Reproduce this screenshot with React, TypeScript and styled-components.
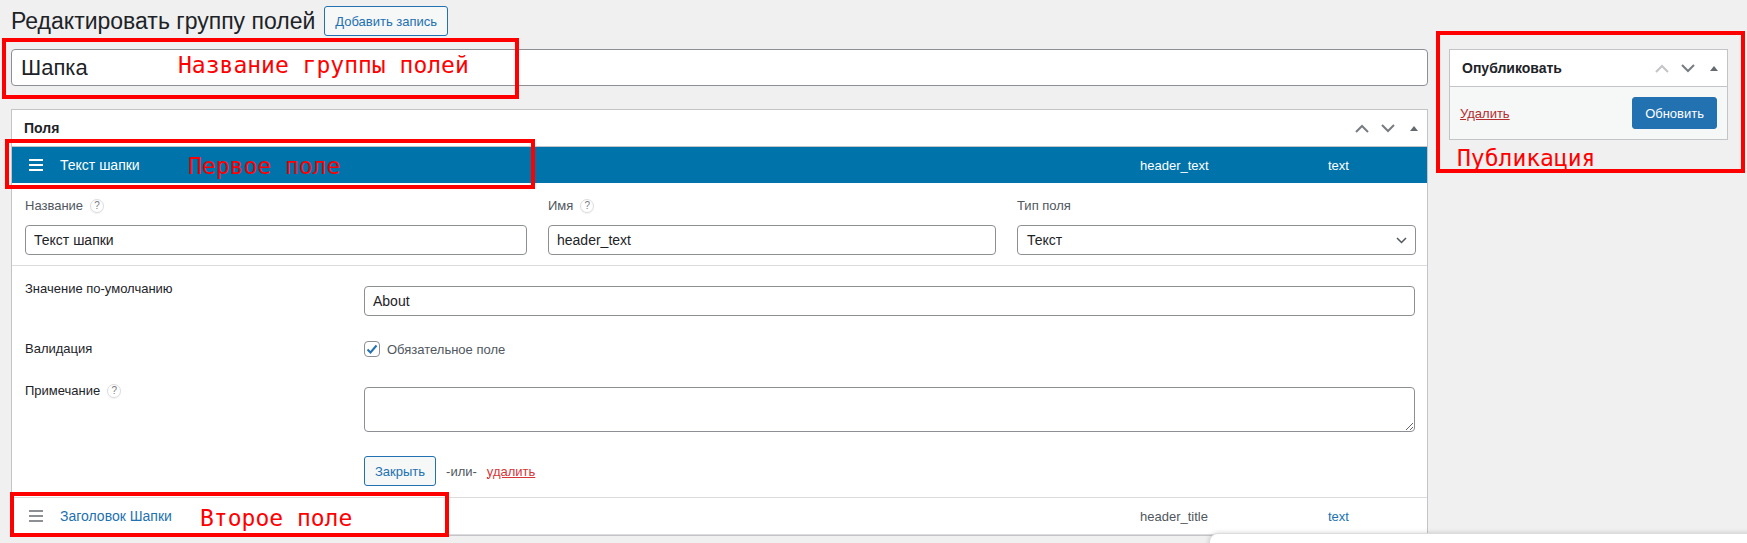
import React from "react";
import styled, { createGlobalStyle } from "styled-components";

const GlobalStyle = createGlobalStyle`
  html, body {
    margin: 0;
    background: #f0f0f1;
  }
  body {
    font-family: "Liberation Sans", Arial, sans-serif;
    font-size: 13px;
    color: #1d2327;
    overflow: hidden;
  }
  * {
    box-sizing: border-box;
  }
`;

const Page = styled.div`
  position: relative;
  height: 543px;
  padding: 6px 19px 0 11px;
  overflow: hidden;
`;

const Heading = styled.div`
  display: flex;
  align-items: flex-start;
  gap: 9px;
`;

const Title = styled.h1`
  margin: 0;
  font-size: 23px;
  font-weight: 400;
  line-height: 30px;
  color: #1d2327;
`;

const Button = styled.button<{ $primary?: boolean; $large?: boolean }>`
  height: ${(p) => (p.$large ? 32 : 30)}px;
  padding: 0 ${(p) => (p.$large ? 12 : 10)}px;
  border: 1px solid #2271b1;
  border-radius: 3px;
  background: ${(p) => (p.$primary ? "#2271b1" : "#f6f7f7")};
  color: ${(p) => (p.$primary ? "#fff" : "#2271b1")};
  font: 13px "Liberation Sans", Arial, sans-serif;
  cursor: pointer;
`;

const Columns = styled.div`
  display: flex;
  align-items: flex-start;
  gap: 21px;
  margin-top: 13px;
`;

const Main = styled.div`
  flex: 1;
  min-width: 0;
`;

const Side = styled.aside`
  flex: none;
  width: 279px;
`;

const TitleInput = styled.input`
  display: block;
  width: 100%;
  height: 37px;
  padding: 0 9px;
  border: 1px solid #8c8f94;
  border-radius: 4px;
  background: #fff;
  font: 22px "Liberation Sans", Arial, sans-serif;
  color: #1d2327;
  outline: none;
`;

const Panel = styled.section`
  margin-top: 23px;
  background: #fff;
  border: 1px solid #c3c4c7;
`;

const PanelHead = styled.div`
  display: flex;
  align-items: center;
  justify-content: space-between;
  height: 37px;
  padding-left: 12px;
  border-bottom: 1px solid #c3c4c7;
`;

const PanelTitle = styled.h2`
  margin: 0;
  font-size: 14px;
  font-weight: 700;
  color: #1d2327;
`;

const Controls = styled.div`
  display: flex;
  align-items: center;
`;

const IconButton = styled.span<{ $tone?: string }>`
  display: flex;
  align-items: center;
  justify-content: center;
  width: 26px;
  height: 34px;
  color: ${(p) => p.$tone || "#787c82"};
`;

const FieldRow = styled.div<{ $open?: boolean }>`
  display: grid;
  grid-template-columns: 31px 1fr 188px 99px;
  align-items: center;
  height: ${(p) => (p.$open ? 36 : 37)}px;
  padding-left: 17px;
  background: ${(p) => (p.$open ? "#0073aa" : "#fff")};
  color: ${(p) => (p.$open ? "#fff" : "#50575e")};
  border-bottom: ${(p) => (p.$open ? "none" : "1px solid #dcdcde")};
`;

const Handle = styled.span<{ $open?: boolean }>`
  display: flex;
  color: ${(p) => (p.$open ? "#fff" : "#8c8f94")};
`;

const RowLabel = styled.span<{ $link?: boolean }>`
  font-size: 14px;
  color: ${(p) => (p.$link ? "#2271b1" : "inherit")};
`;

const RowMeta = styled.span<{ $link?: boolean }>`
  font-size: 13px;
  color: ${(p) => (p.$link ? "#2271b1" : "inherit")};
`;

const FieldBody = styled.div`
  border-bottom: 1px solid #dcdcde;
`;

const TopGrid = styled.div`
  display: grid;
  grid-template-columns: 502fr 448fr 399fr;
  column-gap: 21px;
  padding: 14px 11px 10px 13px;
  border-bottom: 1px solid #dcdcde;
`;

const Cell = styled.div`
  display: flex;
  flex-direction: column;
  gap: 10px;
`;

const Label = styled.label<{ $muted?: boolean }>`
  display: flex;
  align-items: center;
  gap: 7px;
  line-height: 18px;
  font-size: 13px;
  color: ${(p) => (p.$muted ? "#50575e" : "#1d2327")};
`;

const Help = styled.span`
  display: inline-flex;
  align-items: center;
  justify-content: center;
  width: 14px;
  height: 14px;
  border: 1px solid #dcdcde;
  border-radius: 50%;
  font-size: 10px;
  color: #787c82;
  box-shadow: 0 1px 1px rgba(0, 0, 0, 0.06);
`;

const TextInput = styled.input`
  display: block;
  width: 100%;
  height: 30px;
  padding: 0 8px;
  border: 1px solid #8c8f94;
  border-radius: 4px;
  background: #fff;
  font: 14px "Liberation Sans", Arial, sans-serif;
  color: #1d2327;
  outline: none;
`;

const SelectBox = styled.div`
  display: flex;
  align-items: center;
  justify-content: space-between;
  height: 30px;
  padding: 0 8px 0 9px;
  border: 1px solid #8c8f94;
  border-radius: 4px;
  background: #fff;
  font-size: 14px;
  color: #1d2327;
`;

const Settings = styled.div`
  display: flex;
  flex-direction: column;
  gap: 24px;
  padding: 14px 12px 11px 13px;
`;

const SettingRow = styled.div`
  display: grid;
  grid-template-columns: 339px 1fr;
  align-items: start;
`;

const Value = styled.div<{ $offset?: number }>`
  margin-top: ${(p) => p.$offset || 0}px;
`;

const CheckLine = styled.label`
  display: flex;
  align-items: center;
  gap: 7px;
  font-size: 13px;
  color: #50575e;
`;

const CheckBox = styled.span`
  display: flex;
  align-items: center;
  justify-content: center;
  width: 16px;
  height: 16px;
  border: 1px solid #8c8f94;
  border-radius: 4px;
  background: #fff;
  color: #2271b1;
`;

const TextArea = styled.textarea`
  display: block;
  width: 100%;
  height: 45px;
  padding: 6px 8px;
  border: 1px solid #8c8f94;
  border-radius: 4px;
  font: 14px "Liberation Sans", Arial, sans-serif;
  outline: none;
`;

const Actions = styled.div`
  display: flex;
  align-items: center;
  gap: 10px;
  color: #50575e;
`;

const DangerLink = styled.a<{ $dark?: boolean }>`
  color: ${(p) => (p.$dark ? "#b32d2e" : "#d63638")};
  text-decoration: underline;
  font-size: 13px;
  cursor: pointer;
`;

const Box = styled.div`
  background: #fff;
  border: 1px solid #c3c4c7;
`;

const BoxHead = styled.div`
  display: flex;
  align-items: center;
  justify-content: space-between;
  height: 37px;
  padding-left: 12px;
  border-bottom: 1px solid #c3c4c7;
`;

const BoxFooter = styled.div`
  display: flex;
  align-items: center;
  justify-content: space-between;
  padding: 10px;
  background: #f6f7f7;
`;

const Note = styled.div<{ $x: number; $y: number; $w: number; $h: number }>`
  position: absolute;
  left: ${(p) => p.$x}px;
  top: ${(p) => p.$y}px;
  width: ${(p) => p.$w}px;
  height: ${(p) => p.$h}px;
  border: 4px solid #ff0000;
  pointer-events: none;
`;

const NoteText = styled.span<{ $x: number; $y: number }>`
  position: absolute;
  left: ${(p) => p.$x}px;
  top: ${(p) => p.$y}px;
  font-family: "DejaVu Sans Mono", monospace;
  font-size: 23px;
  line-height: 1;
  color: #ff0000;
  white-space: pre;
`;

const Popup = styled.div`
  position: absolute;
  left: 1209px;
  top: 533px;
  width: 560px;
  height: 80px;
  background: #fff;
  border: 1px solid #dcdcde;
  border-radius: 9px;
  box-shadow: 0 0 5px rgba(0, 0, 0, 0.18);
`;

const ChevronUp = () => (
  <svg width="14" height="9" viewBox="0 0 14 9">
    <path d="M1 8 7 2l6 6" fill="none" stroke="currentColor" strokeWidth="2" />
  </svg>
);

const ChevronDown = () => (
  <svg width="14" height="9" viewBox="0 0 14 9">
    <path d="M1 1l6 6 6-6" fill="none" stroke="currentColor" strokeWidth="2" />
  </svg>
);

const Triangle = () => (
  <svg width="8" height="5" viewBox="0 0 8 5">
    <path d="M0 5 4 0l4 5z" fill="currentColor" />
  </svg>
);

const Menu = () => (
  <svg width="14" height="12" viewBox="0 0 14 12">
    <rect x="0" y="0" width="14" height="2" fill="currentColor" />
    <rect x="0" y="5" width="14" height="2" fill="currentColor" />
    <rect x="0" y="10" width="14" height="2" fill="currentColor" />
  </svg>
);

const SmallChevron = () => (
  <svg width="11" height="7" viewBox="0 0 11 7">
    <path d="M1 1l4.5 4.5L10 1" fill="none" stroke="#50575e" strokeWidth="1.5" />
  </svg>
);

const Check = () => (
  <svg width="14" height="14" viewBox="0 0 14 14">
    <path d="M2.5 7.5l3 3 6-7" fill="none" stroke="currentColor" strokeWidth="2" />
  </svg>
);

const BoxControls = ({ upTone }: { upTone?: string }) => (
  <Controls>
    <IconButton $tone={upTone}>
      <ChevronUp />
    </IconButton>
    <IconButton>
      <ChevronDown />
    </IconButton>
    <IconButton $tone="#646970">
      <Triangle />
    </IconButton>
  </Controls>
);

const App: React.FC = () => {
  return (
    <Page>
      <GlobalStyle />
      <Heading>
        <Title>Редактировать группу полей</Title>
        <Button>Добавить запись</Button>
      </Heading>

      <Columns>
        <Main>
          <TitleInput defaultValue="Шапка" />

          <Panel>
            <PanelHead>
              <PanelTitle>Поля</PanelTitle>
              <BoxControls />
            </PanelHead>

            <FieldRow $open>
              <Handle $open>
                <Menu />
              </Handle>
              <RowLabel>Текст шапки</RowLabel>
              <RowMeta>header_text</RowMeta>
              <RowMeta>text</RowMeta>
            </FieldRow>

            <FieldBody>
              <TopGrid>
                <Cell>
                  <Label $muted>
                    Название <Help>?</Help>
                  </Label>
                  <TextInput defaultValue="Текст шапки" />
                </Cell>
                <Cell>
                  <Label $muted>
                    Имя <Help>?</Help>
                  </Label>
                  <TextInput defaultValue="header_text" />
                </Cell>
                <Cell>
                  <Label $muted>Тип поля</Label>
                  <SelectBox>
                    <span>Текст</span>
                    <SmallChevron />
                  </SelectBox>
                </Cell>
              </TopGrid>

              <Settings>
                <SettingRow>
                  <Label>Значение по-умолчанию</Label>
                  <Value $offset={6}>
                    <TextInput defaultValue="About" />
                  </Value>
                </SettingRow>
                <SettingRow>
                  <Label>Валидация</Label>
                  <Value $offset={1}>
                    <CheckLine>
                      <CheckBox>
                        <Check />
                      </CheckBox>
                      Обязательное поле
                    </CheckLine>
                  </Value>
                </SettingRow>
                <SettingRow>
                  <Label>
                    Примечание <Help>?</Help>
                  </Label>
                  <Value $offset={5}>
                    <TextArea />
                  </Value>
                </SettingRow>
                <SettingRow>
                  <span />
                  <Actions>
                    <Button>Закрыть</Button>
                    <span>-или-</span>
                    <DangerLink>удалить</DangerLink>
                  </Actions>
                </SettingRow>
              </Settings>
            </FieldBody>

            <FieldRow>
              <Handle>
                <Menu />
              </Handle>
              <RowLabel $link>Заголовок Шапки</RowLabel>
              <RowMeta>header_title</RowMeta>
              <RowMeta $link>text</RowMeta>
            </FieldRow>
          </Panel>
        </Main>

        <Side>
          <Box>
            <BoxHead>
              <PanelTitle>Опубликовать</PanelTitle>
              <BoxControls upTone="#c3c4c7" />
            </BoxHead>
            <BoxFooter>
              <DangerLink $dark>Удалить</DangerLink>
              <Button $primary $large>
                Обновить
              </Button>
            </BoxFooter>
          </Box>
        </Side>
      </Columns>

      <Popup />

      <Note $x={2} $y={38} $w={517} $h={61}>
        <NoteText $x={172} $y={12}>
          Название группы полей
        </NoteText>
      </Note>
      <Note $x={5} $y={139} $w={530} $h={50}>
        <NoteText $x={179} $y={12}>
          Первое поле
        </NoteText>
      </Note>
      <Note $x={10} $y={492} $w={439} $h={45}>
        <NoteText $x={186} $y={11}>
          Второе поле
        </NoteText>
      </Note>
      <Note $x={1436} $y={31} $w={309} $h={142}>
        <NoteText $x={17} $y={112}>
          Публикация
        </NoteText>
      </Note>
    </Page>
  );
};

export default App;
